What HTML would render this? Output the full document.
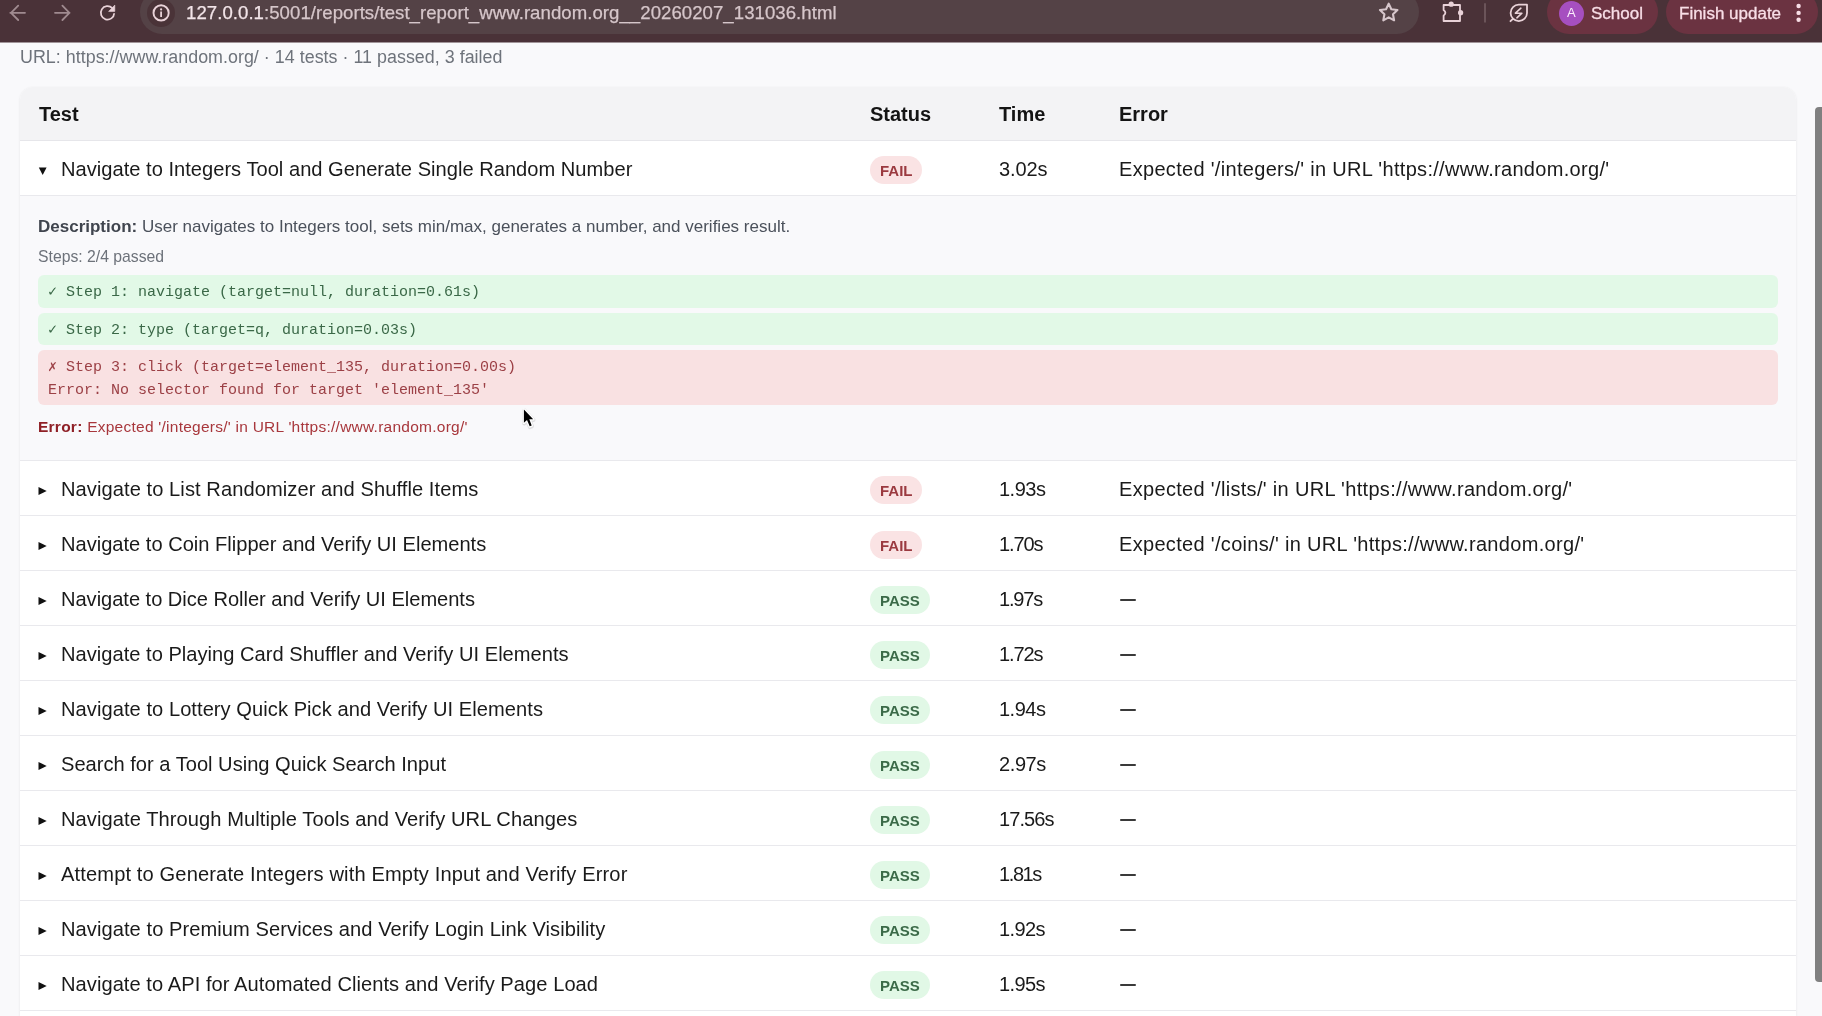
<!DOCTYPE html>
<html><head><meta charset="utf-8"><style>
html{margin:0;padding:0;width:1822px;height:1016px;overflow:hidden;}
body{margin:0;padding:0;width:1822px;height:1016px;overflow:hidden;position:relative;}
body{width:1822px;height:1016px;overflow:hidden;position:relative;background:#f9f9fb;font-family:'Liberation Sans',sans-serif;}
.t{position:absolute;white-space:nowrap;line-height:0;height:0;will-change:transform;}
.b{position:absolute;}
</style></head><body>
<div class="b" style="left:0px;top:0px;width:1822px;height:42px;background:#4a3238;"></div>
<div class="b" style="left:0px;top:42px;width:1822px;height:1px;background:#a19599;"></div>
<div class="b" style="left:140.3px;top:-10px;width:1278.3px;height:44px;background:#544246;border-radius:22px;"></div>
<div class="b" style="left:147.0px;top:-1.0999999999999996px;width:28.4px;height:28.4px;background:#4a3338;border-radius:14.2px;"></div>
<div class="b" style="left:1547px;top:-10px;width:111.4px;height:44px;background:#6b3341;border-radius:22px;"></div>
<div class="b" style="left:1665.7px;top:-10px;width:152.1px;height:44px;background:#6b3341;border-radius:22px;"></div>
<div class="b" style="left:1559px;top:0.7px;width:25px;height:25px;background:#a64fc0;border-radius:12.5px;"></div>
<svg class="b" width="1822" height="42" style="left:0;top:0"><path d="M10.3 12.8H25 M18.2 5.7L11 12.8L18.2 20" stroke="#a08b90" stroke-width="1.8" fill="none" stroke-linecap="round" stroke-linejoin="round"/><path d="M55 12.8H69.6 M62.4 5.7L69.4 12.8L62.4 20" stroke="#a08b90" stroke-width="1.8" fill="none" stroke-linecap="round" stroke-linejoin="round"/><path d="M114.2 13.2 A6.7 6.7 0 1 1 112.3 8.2" stroke="#e9d2d8" stroke-width="1.8" fill="none"/><path d="M108.6 11.4 L114.8 11.4 L114.8 5.1 Z" fill="#e9d2d8" stroke="#e9d2d8" stroke-width="0.6" stroke-linejoin="round"/><circle cx="161.1" cy="12.9" r="7.6" stroke="#e9d2d8" stroke-width="1.9" fill="none"/><circle cx="161.1" cy="9.4" r="1.1" fill="#e9d2d8"/><path d="M161.1 11.6V16.9" stroke="#e9d2d8" stroke-width="1.8"/><polygon points="1388.70,3.70 1391.35,9.26 1397.45,10.06 1392.98,14.29 1394.11,20.34 1388.70,17.40 1383.29,20.34 1384.42,14.29 1379.95,10.06 1386.05,9.26" stroke="#d6c6cb" stroke-width="2.1" fill="none" stroke-linejoin="round"/><path d="M1443.6 5 H1460 V21 H1443.6 V15.6 Q1447.2 12.8 1443.6 10 Z" stroke="#e9d2d8" stroke-width="1.8" fill="none" stroke-linejoin="round"/><circle cx="1451.2" cy="4.2" r="2.6" fill="#e9d2d8"/><circle cx="1460.6" cy="12.7" r="2.6" fill="#e9d2d8"/><path d="M1485 3.2V22.4" stroke="#6b5459" stroke-width="2"/><path d="M1527 4.7 V12.9 A8.2 8.2 0 0 1 1518.8 21.1 A8.2 8.2 0 0 1 1510.6 12.9 A8.2 8.2 0 0 1 1518.8 4.7 Z M1512.9 18.8 L1510.5 21.2" stroke="#e9d2d8" stroke-width="1.8" fill="none" stroke-linejoin="round" stroke-linecap="round"/><path d="M1520.9 8.2 L1515.4 13.2 H1521.9 L1516.9 17.8" stroke="#e9d2d8" stroke-width="1.6" fill="none" stroke-linejoin="round" stroke-linecap="round"/><circle cx="1798.6" cy="6.0" r="2.2" fill="#f7dde5"/><circle cx="1798.6" cy="12.9" r="2.2" fill="#f7dde5"/><circle cx="1798.6" cy="19.8" r="2.2" fill="#f7dde5"/></svg>
<div class="t" style="left:1566.60px;top:13.39px;font-size:13px;color:#fbeefc;">A</div>
<div class="t" style="left:186.20px;top:13.15px;font-size:18.6px;color:#d6c6ca;letter-spacing:0.05px;-webkit-text-stroke:0.25px currentColor;"><span style="color:#f3e5e9">127.0.0.1</span>:5001/reports/test_report_www.random.org__20260207_131036.html</div>
<div class="t" style="left:1591.00px;top:13.91px;font-size:17px;color:#f8dee6;-webkit-text-stroke:0.3px #f8dee6;">School</div>
<div class="t" style="left:1679.30px;top:13.91px;font-size:17px;color:#f8dee6;-webkit-text-stroke:0.3px #f8dee6;">Finish update</div>
<div class="t" style="left:19.80px;top:56.61px;font-size:17.85px;color:#6e737b;letter-spacing:0.03px;">URL: https://www.random.org/ · 14 tests · 11 passed, 3 failed</div>
<div class="b" style="left:19.5px;top:86.7px;width:1776.5px;height:929.3px;background:#ffffff;border-radius:13px 13px 0 0;box-shadow:0 1px 3px rgba(0,0,0,0.07),0 0 1px rgba(0,0,0,0.05);"></div>
<div class="b" style="left:19.5px;top:86.7px;width:1776.5px;height:53.3px;background:#f3f3f5;border-radius:13px 13px 0 0;"></div>
<div class="b" style="left:19.5px;top:140px;width:1776.5px;height:1px;background:#e6e6ea;"></div>
<div class="t" style="left:38.60px;top:113.57px;font-size:20px;color:#141414;font-weight:bold;">Test</div>
<div class="t" style="left:870.30px;top:113.57px;font-size:20px;color:#141414;font-weight:bold;">Status</div>
<div class="t" style="left:998.60px;top:113.57px;font-size:20px;color:#141414;font-weight:bold;">Time</div>
<div class="t" style="left:1118.90px;top:113.57px;font-size:20px;color:#141414;font-weight:bold;">Error</div>
<div class="b" style="left:19.5px;top:195px;width:1776.5px;height:1px;background:#e9e9ed;"></div>
<div class="t" style="left:60.50px;top:169.03px;font-size:20.1px;color:#1a1a1a;letter-spacing:0.017px;">Navigate to Integers Tool and Generate Single Random Number</div>
<div class="b" style="left:870.2px;top:156px;width:52px;height:28px;background:#fae3e4;border-radius:14px;"></div>
<div class="t" style="left:879.90px;top:171.00px;font-size:15px;color:#9b3a40;font-weight:bold;">FAIL</div>
<div class="t" style="left:998.60px;top:169.07px;font-size:20px;color:#1a1a1a;letter-spacing:-0.1px;">3.02s</div>
<div class="t" style="left:1118.90px;top:169.07px;font-size:20px;color:#1a1a1a;letter-spacing:0.31px;">Expected '/integers/' in URL 'https://www.random.org/'</div>
<div class="b" style="left:19.5px;top:196px;width:1776.5px;height:264px;background:#f9f9fb;"></div>
<div class="b" style="left:19.5px;top:460px;width:1776.5px;height:1px;background:#e9e9ed;"></div>
<div class="t" style="left:37.60px;top:227.21px;font-size:17.0px;color:#4b515b;"><b style="color:#40454e">Description:</b> User navigates to Integers tool, sets min/max, generates a number, and verifies result.</div>
<div class="t" style="left:37.60px;top:257.44px;font-size:15.75px;color:#6d727a;">Steps: 2/4 passed</div>
<div class="b" style="left:37.8px;top:275px;width:1740.5px;height:32.7px;background:#e2f9e7;border-radius:6px;"></div>
<div class="b" style="left:37.8px;top:312.7px;width:1740.5px;height:32.6px;background:#e2f9e7;border-radius:6px;"></div>
<div class="b" style="left:37.8px;top:350.3px;width:1740.5px;height:54.4px;background:#f9e1e2;border-radius:6px;"></div>
<div class="t" style="left:47.70px;top:293.31px;font-size:15px;color:#3a6847;font-family:'Liberation Mono',monospace;">✓ Step 1: navigate (target=null, duration=0.61s)</div>
<div class="t" style="left:47.70px;top:331.01px;font-size:15px;color:#3a6847;font-family:'Liberation Mono',monospace;">✓ Step 2: type (target=q, duration=0.03s)</div>
<div class="t" style="left:47.70px;top:368.31px;font-size:15px;color:#9c4046;font-family:'Liberation Mono',monospace;">✗ Step 3: click (target=element_135, duration=0.00s)</div>
<div class="t" style="left:47.70px;top:390.81px;font-size:15px;color:#9c4046;font-family:'Liberation Mono',monospace;">Error: No selector found for target 'element_135'</div>
<div class="t" style="left:37.60px;top:427.03px;font-size:15.5px;color:#a8373c;letter-spacing:0.25px;"><b style="color:#8f2026">Error:</b> Expected '/integers/' in URL 'https://www.random.org/'</div>
<div class="b" style="left:19.5px;top:515px;width:1776.5px;height:1px;background:#e9e9ed;"></div>
<div class="t" style="left:60.50px;top:489.03px;font-size:20.1px;color:#1a1a1a;letter-spacing:0.074px;">Navigate to List Randomizer and Shuffle Items</div>
<div class="b" style="left:870.2px;top:476px;width:52px;height:28px;background:#fae3e4;border-radius:14px;"></div>
<div class="t" style="left:879.90px;top:491.00px;font-size:15px;color:#9b3a40;font-weight:bold;">FAIL</div>
<div class="t" style="left:998.60px;top:489.07px;font-size:20px;color:#1a1a1a;letter-spacing:-0.5px;">1.93s</div>
<div class="t" style="left:1118.90px;top:489.07px;font-size:20px;color:#1a1a1a;letter-spacing:0.324px;">Expected '/lists/' in URL 'https://www.random.org/'</div>
<div class="b" style="left:19.5px;top:570px;width:1776.5px;height:1px;background:#e9e9ed;"></div>
<div class="t" style="left:60.50px;top:544.03px;font-size:20.1px;color:#1a1a1a;letter-spacing:-0.006px;">Navigate to Coin Flipper and Verify UI Elements</div>
<div class="b" style="left:870.2px;top:531px;width:52px;height:28px;background:#fae3e4;border-radius:14px;"></div>
<div class="t" style="left:879.90px;top:546.00px;font-size:15px;color:#9b3a40;font-weight:bold;">FAIL</div>
<div class="t" style="left:998.60px;top:544.07px;font-size:20px;color:#1a1a1a;letter-spacing:-1.1px;">1.70s</div>
<div class="t" style="left:1118.90px;top:544.07px;font-size:20px;color:#1a1a1a;letter-spacing:0.318px;">Expected '/coins/' in URL 'https://www.random.org/'</div>
<div class="b" style="left:19.5px;top:625px;width:1776.5px;height:1px;background:#e9e9ed;"></div>
<div class="t" style="left:60.50px;top:599.03px;font-size:20.1px;color:#1a1a1a;letter-spacing:-0.033px;">Navigate to Dice Roller and Verify UI Elements</div>
<div class="b" style="left:870.2px;top:586px;width:59.8px;height:28px;background:#e1f8e6;border-radius:14px;"></div>
<div class="t" style="left:879.90px;top:601.00px;font-size:15px;color:#3b6a48;font-weight:bold;">PASS</div>
<div class="t" style="left:998.60px;top:599.07px;font-size:20px;color:#1a1a1a;letter-spacing:-1.2px;">1.97s</div>
<div class="b" style="left:1119.9px;top:599.0px;width:16px;height:1.8px;background:#3a3a3a;border-radius:0.9px;"></div>
<div class="b" style="left:19.5px;top:680px;width:1776.5px;height:1px;background:#e9e9ed;"></div>
<div class="t" style="left:60.50px;top:654.03px;font-size:20.1px;color:#1a1a1a;letter-spacing:0.016px;">Navigate to Playing Card Shuffler and Verify UI Elements</div>
<div class="b" style="left:870.2px;top:641px;width:59.8px;height:28px;background:#e1f8e6;border-radius:14px;"></div>
<div class="t" style="left:879.90px;top:656.00px;font-size:15px;color:#3b6a48;font-weight:bold;">PASS</div>
<div class="t" style="left:998.60px;top:654.07px;font-size:20px;color:#1a1a1a;letter-spacing:-1.1px;">1.72s</div>
<div class="b" style="left:1119.9px;top:654.0px;width:16px;height:1.8px;background:#3a3a3a;border-radius:0.9px;"></div>
<div class="b" style="left:19.5px;top:735px;width:1776.5px;height:1px;background:#e9e9ed;"></div>
<div class="t" style="left:60.50px;top:709.03px;font-size:20.1px;color:#1a1a1a;letter-spacing:0.056px;">Navigate to Lottery Quick Pick and Verify UI Elements</div>
<div class="b" style="left:870.2px;top:696px;width:59.8px;height:28px;background:#e1f8e6;border-radius:14px;"></div>
<div class="t" style="left:879.90px;top:711.00px;font-size:15px;color:#3b6a48;font-weight:bold;">PASS</div>
<div class="t" style="left:998.60px;top:709.07px;font-size:20px;color:#1a1a1a;letter-spacing:-0.5px;">1.94s</div>
<div class="b" style="left:1119.9px;top:709.0px;width:16px;height:1.8px;background:#3a3a3a;border-radius:0.9px;"></div>
<div class="b" style="left:19.5px;top:790px;width:1776.5px;height:1px;background:#e9e9ed;"></div>
<div class="t" style="left:60.50px;top:764.03px;font-size:20.1px;color:#1a1a1a;">Search for a Tool Using Quick Search Input</div>
<div class="b" style="left:870.2px;top:751px;width:59.8px;height:28px;background:#e1f8e6;border-radius:14px;"></div>
<div class="t" style="left:879.90px;top:766.00px;font-size:15px;color:#3b6a48;font-weight:bold;">PASS</div>
<div class="t" style="left:998.60px;top:764.07px;font-size:20px;color:#1a1a1a;letter-spacing:-0.4px;">2.97s</div>
<div class="b" style="left:1119.9px;top:764.0px;width:16px;height:1.8px;background:#3a3a3a;border-radius:0.9px;"></div>
<div class="b" style="left:19.5px;top:845px;width:1776.5px;height:1px;background:#e9e9ed;"></div>
<div class="t" style="left:60.50px;top:819.03px;font-size:20.1px;color:#1a1a1a;letter-spacing:0.074px;">Navigate Through Multiple Tools and Verify URL Changes</div>
<div class="b" style="left:870.2px;top:806px;width:59.8px;height:28px;background:#e1f8e6;border-radius:14px;"></div>
<div class="t" style="left:879.90px;top:821.00px;font-size:15px;color:#3b6a48;font-weight:bold;">PASS</div>
<div class="t" style="left:998.60px;top:819.07px;font-size:20px;color:#1a1a1a;letter-spacing:-0.92px;">17.56s</div>
<div class="b" style="left:1119.9px;top:819.0px;width:16px;height:1.8px;background:#3a3a3a;border-radius:0.9px;"></div>
<div class="b" style="left:19.5px;top:900px;width:1776.5px;height:1px;background:#e9e9ed;"></div>
<div class="t" style="left:60.50px;top:874.03px;font-size:20.1px;color:#1a1a1a;letter-spacing:0.13px;">Attempt to Generate Integers with Empty Input and Verify Error</div>
<div class="b" style="left:870.2px;top:861px;width:59.8px;height:28px;background:#e1f8e6;border-radius:14px;"></div>
<div class="t" style="left:879.90px;top:876.00px;font-size:15px;color:#3b6a48;font-weight:bold;">PASS</div>
<div class="t" style="left:998.60px;top:874.07px;font-size:20px;color:#1a1a1a;letter-spacing:-1.4px;">1.81s</div>
<div class="b" style="left:1119.9px;top:874.0px;width:16px;height:1.8px;background:#3a3a3a;border-radius:0.9px;"></div>
<div class="b" style="left:19.5px;top:955px;width:1776.5px;height:1px;background:#e9e9ed;"></div>
<div class="t" style="left:60.50px;top:929.03px;font-size:20.1px;color:#1a1a1a;letter-spacing:0.069px;">Navigate to Premium Services and Verify Login Link Visibility</div>
<div class="b" style="left:870.2px;top:916px;width:59.8px;height:28px;background:#e1f8e6;border-radius:14px;"></div>
<div class="t" style="left:879.90px;top:931.00px;font-size:15px;color:#3b6a48;font-weight:bold;">PASS</div>
<div class="t" style="left:998.60px;top:929.07px;font-size:20px;color:#1a1a1a;letter-spacing:-0.625px;">1.92s</div>
<div class="b" style="left:1119.9px;top:929.0px;width:16px;height:1.8px;background:#3a3a3a;border-radius:0.9px;"></div>
<div class="b" style="left:19.5px;top:1010px;width:1776.5px;height:1px;background:#e9e9ed;"></div>
<div class="t" style="left:60.50px;top:984.03px;font-size:20.1px;color:#1a1a1a;letter-spacing:0.054px;">Navigate to API for Automated Clients and Verify Page Load</div>
<div class="b" style="left:870.2px;top:971px;width:59.8px;height:28px;background:#e1f8e6;border-radius:14px;"></div>
<div class="t" style="left:879.90px;top:986.00px;font-size:15px;color:#3b6a48;font-weight:bold;">PASS</div>
<div class="t" style="left:998.60px;top:984.07px;font-size:20px;color:#1a1a1a;letter-spacing:-0.625px;">1.95s</div>
<div class="b" style="left:1119.9px;top:984.0px;width:16px;height:1.8px;background:#3a3a3a;border-radius:0.9px;"></div>
<svg class="b" width="1822" height="1016" style="left:0;top:0"><path d="M38.8 167.4 H46.6 L42.7 175.1 Z" fill="#111"/><path d="M38.5 486.9 V495.1 L46.7 491.0 Z" fill="#111"/><path d="M38.5 541.9 V550.1 L46.7 546.0 Z" fill="#111"/><path d="M38.5 596.9 V605.1 L46.7 601.0 Z" fill="#111"/><path d="M38.5 651.9 V660.1 L46.7 656.0 Z" fill="#111"/><path d="M38.5 706.9 V715.1 L46.7 711.0 Z" fill="#111"/><path d="M38.5 761.9 V770.1 L46.7 766.0 Z" fill="#111"/><path d="M38.5 816.9 V825.1 L46.7 821.0 Z" fill="#111"/><path d="M38.5 871.9 V880.1 L46.7 876.0 Z" fill="#111"/><path d="M38.5 926.9 V935.1 L46.7 931.0 Z" fill="#111"/><path d="M38.5 981.9 V990.1 L46.7 986.0 Z" fill="#111"/></svg>
<div class="b" style="left:1815.2px;top:107px;width:6.8px;height:875px;background:#808080;border-radius:4px 0 0 4px;"></div>
<svg class="b" width="30" height="30" style="left:515px;top:402px" viewBox="0 0 30 30"><path d="M8.9 7.4 L8.9 20.7 L12.0 17.9 L14.7 24.3 L16.7 23.5 L14.3 17.2 L18.2 17.2 Z" fill="rgba(0,0,0,0.10)" stroke="rgba(0,0,0,0.10)" stroke-width="4" transform="translate(0.3 0.8)" stroke-linejoin="round"/><path d="M8.9 7.4 L8.9 20.7 L12.0 17.9 L14.7 24.3 L16.7 23.5 L14.3 17.2 L18.2 17.2 Z" fill="#000" stroke="#fff" stroke-width="2.6" stroke-linejoin="round" paint-order="stroke"/></svg>

</body></html>
